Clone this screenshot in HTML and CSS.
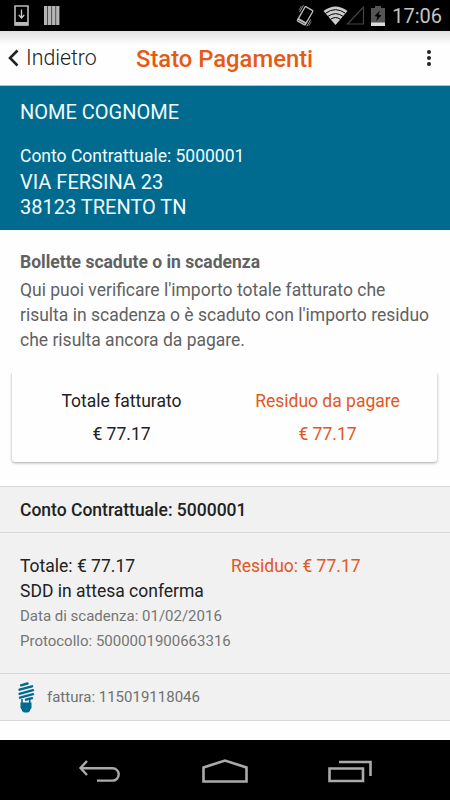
FILE: index.html
```html
<!DOCTYPE html>
<html lang="it">
<head>
    <meta charset="UTF-8">
    <meta name="viewport" content="width=device-width, initial-scale=1.0">
    <title>Stato Pagamenti</title>
    <link rel="stylesheet" href="styles.css">
</head>
<body>
    <div class="status-bar">
        <div class="status-left">
            <svg width="16" height="22" viewBox="0 0 16 22">
                <path d="M1 1h13v19h-13z" fill="none" stroke="#bbb" stroke-width="1.6"/>
                <path d="M1 17h13v3.5h-13z" fill="#bbb"/>
                <path d="M7.5 4.5v8M4.8 10l2.7 3 2.7-3" fill="none" stroke="#ccc" stroke-width="1.3"/>
            </svg>
            <svg width="16" height="19" viewBox="0 0 16 19">
                <path d="M0 0h15.400v19h-15.400z" fill="#b5b5b5"/>
                <path d="M3.500 0v19M7.600 0v19M11.700 0v19" stroke="#333" stroke-width=".8"/>
            </svg>
        </div>
        <div class="status-right">
            <svg width="20" height="22" viewBox="0 0 20 22">
                <g transform="rotate(30 10 11)" fill="none" stroke="#bbb">
                    <rect x="5.500" y="2.500" width="9" height="16.500" rx="1" stroke-width="1.400"/>
                    <path d="M5.500 16.800h9" stroke-width="2"/>
                    <path d="M3.300 2.500v8M16.700 11v8" stroke-width=".8"/>
                    <path d="M1.800 4v5M18.200 12.500v5" stroke="#777" stroke-width=".8"/>
                </g>
            </svg>
            <svg class="wifi" width="25" height="19" viewBox="0 0 25 19">
                <path d="M12.5 19L.5 5Q12.5-4 24.5 5z" fill="#ccc"/>
                <path d="M2.5 7.3Q12.5 0 22.5 7.3M5 10.3Q12.5 5 20 10.3M7.6 13.3Q12.5 9.8 17.4 13.3" fill="none" stroke="#000" stroke-width="1"/>
            </svg>
            <svg class="signal" width="19" height="19" viewBox="0 0 19 19">
                <path d="M1.5 18L17.5 1v17z" fill="none" stroke="#444" stroke-width="1.2"/>
            </svg>
            <svg class="battery" width="14" height="20" viewBox="0 0 14 20">
                <path d="M0 2h4V0h6v2h4v18h-14z" fill="#555"/>
                <path d="M0 16.5h14v3.5h-14z" fill="#ddd"/>
                <path d="M9 4.5L3.5 10l3 .7-1.5 4.5 5.5-6-3-.6z" fill="#000"/>
            </svg>
            <span class="clock">17:06</span>
        </div>
    </div>

    <div class="header">
        <div class="back">
            <svg width="11" height="18" viewBox="0 0 11 18">
                <path d="M9.5 1.5L2 9l7.500 7.500" fill="none" stroke="#222" stroke-width="2.600"/>
            </svg>
            <span>Indietro</span>
        </div>
        <h1>Stato Pagamenti</h1>
        <svg class="menu" width="6" height="18" viewBox="0 0 6 18">
            <circle cx="3" cy="3" r="2" fill="#222"/>
            <circle cx="3" cy="9" r="2" fill="#222"/>
            <circle cx="3" cy="15" r="2" fill="#222"/>
        </svg>
    </div>

    <div class="customer">
        <div class="name">NOME COGNOME</div>
        <div class="account">Conto Contrattuale: 5000001</div>
        <div class="address">VIA FERSINA 23</div>
        <div class="address">38123 TRENTO TN</div>
    </div>

    <div class="intro">
        <h2>Bollette scadute o in scadenza</h2>
        <p>Qui puoi verificare l'importo totale fatturato che<br>risulta in scadenza o è scaduto con l'importo residuo<br>che risulta ancora da pagare.</p>
    </div>

    <div class="card">
        <div class="total">
            <div>Totale fatturato</div>
            <div>€ 77.17</div>
        </div>
        <div class="total orange">
            <div>Residuo da pagare</div>
            <div>€ 77.17</div>
        </div>
    </div>

    <div class="list">
        <div class="list-title">Conto Contrattuale: 5000001</div>
        <div class="bill">
            <div class="amounts">
                <span>Totale: € 77.17</span>
                <span class="orange">Residuo: € 77.17</span>
            </div>
            <div>SDD in attesa conferma</div>
            <div class="detail">Data di scadenza: 01/02/2016</div>
            <div class="detail">Protocollo: 5000001900663316</div>
        </div>
        <div class="invoice">
            <svg width="18" height="31" viewBox="0 0 18 31">
                <g fill="none" stroke="#006b8f" stroke-width="2.400" stroke-linecap="round">
                    <path d="M4 3.300L10.500 1.500M2.500 7.700L15 4.300M2.500 11.800L16 8.200M3 15.700L16 12.200M9 17.700L15 16.200"/>
                    <path d="M5 17.500v4M12.700 17v4" stroke-width="1.600"/>
                </g>
                <path d="M3.500 20.500h11v5.500l-1.500 2v1l-2 1.500h-4l-2-1.500v-1l-1.500-2z" fill="#006b8f"/>
            </svg>
            <span>fattura: 115019118046</span>
        </div>
    </div>

    <div class="nav-bar">
        <svg width="44" height="26" viewBox="0 0 44 26">
            <path d="M9 2L2.500 9L9 16M3 9.200H34.500a6.200 6.200 0 0 1 0 12.400H19" fill="none" stroke="#aaa" stroke-width="2.400"/>
        </svg>
        <svg width="46" height="26" viewBox="0 0 46 26">
            <path d="M1.500 22.500V8.500L23 1.500L44.500 8.500V22.500z" fill="none" stroke="#aaa" stroke-width="2.600"/>
        </svg>
        <svg width="44" height="26" viewBox="0 0 44 26">
            <path d="M1.500 9.500h33.500v12.500h-33.500zM11 3h31.500v14" fill="none" stroke="#aaa" stroke-width="2.600"/>
        </svg>
    </div>
</body>
</html>
```
FILE: styles.css
```css
* {
    box-sizing: border-box;
}
body {
    margin: 0;
    width: 450px;
    height: 800px;
    display: flex;
    flex-direction: column;
    overflow: hidden;
    background: #fefefe;
    font-family: Roboto, sans-serif;
    font-size: 17.5px;
    line-height: 25px;
    color: #222;
    white-space: nowrap;
}
h1, h2, p {
    margin: 0;
}
svg {
    display: block;
    flex: none;
}
.status-bar {
    flex: none;
    height: 31px;
    padding: 0 8px 0 14px;
    display: flex;
    justify-content: space-between;
    align-items: center;
    background: #000;
}
.status-left {
    display: flex;
    align-items: center;
    gap: 14px;
}
.status-right {
    display: flex;
    align-items: center;
}
.wifi {
    margin-left: 8px;
}
.signal {
    margin-left: -2px;
}
.battery {
    margin-left: 6px;
}
.clock {
    margin-left: 7px;
    padding-top: 1px;
    font-size: 20px;
    color: #c4c4c4;
}
.header {
    flex: none;
    height: 55px;
    padding: 0 18px 0 8px;
    display: flex;
    align-items: center;
    background: linear-gradient(#e0e0e0, #fefefe 14px);
    border-bottom: 1px solid #a3c6d4;
}
.back {
    display: flex;
    align-items: center;
    gap: 7px;
    width: 128px;
    padding-bottom: 1px;
    font-size: 21.3px;
    font-weight: 300;
}
.header h1 {
    padding-top: 2px;
    font-size: 23.8px;
    font-weight: 500;
    color: #e65a14;
}
.menu {
    margin-left: auto;
}
.customer {
    flex: none;
    height: 144px;
    padding: 14px 20px;
    background: #006b8f;
    color: #f2fbff;
}
.name, .address {
    font-size: 20px;
}
.name {
    margin-bottom: 19px;
}
.account {
    margin-bottom: 1px;
}
.intro {
    padding: 20px 20px 0;
    color: #616161;
}
.intro h2 {
    font-size: 17.5px;
    font-weight: 700;
    line-height: 25px;
    margin-bottom: 3px;
}
.card {
    height: 91px;
    flex: none;
    margin: 18px 13px 0 12px;
    padding-top: 18px;
    display: grid;
    grid-template-columns: 219px 193px;
    border-radius: 3px;
    box-shadow: 0 1px 3px rgba(0, 0, 0, .35);
    clip-path: inset(2px -4px -5px -4px);
    background: #fefefe;
}
.total {
    text-align: center;
    line-height: 25px;
}
.total div + div {
    margin-top: 8px;
}
.orange {
    color: #e2571c;
}
.list {
    flex: none;
    margin-top: 24px;
    background: #f1f1f1;
    border-top: 1px solid #d8d8d8;
    border-bottom: 1px solid #d8d8d8;
}
.list-title {
    height: 46px;
    padding-left: 20px;
    line-height: 46px;
    font-weight: 500;
    border-bottom: 1px solid #d8d8d8;
}
.bill {
    height: 141px;
    padding: 21px 20px 0;
    border-bottom: 1px solid #d8d8d8;
}
.amounts {
    display: grid;
    grid-template-columns: 211px 1fr;
}
.detail {
    font-size: 15px;
    color: #757575;
}
.invoice {
    height: 46px;
    padding-left: 17px;
    display: flex;
    align-items: center;
    gap: 12px;
    font-size: 15px;
    color: #707070;
}
.nav-bar {
    flex: none;
    height: 60px;
    margin-top: auto;
    padding: 3px 78px 0;
    display: flex;
    justify-content: space-between;
    align-items: center;
    background: #000;
}
```
